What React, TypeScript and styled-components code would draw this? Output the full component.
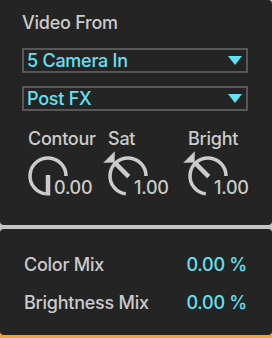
import React from 'react';
import styled, { createGlobalStyle } from 'styled-components';

const GlobalStyle = createGlobalStyle`
  html, body {
    margin: 0;
    padding: 0;
  }
  body {
    background: #c4c4c4;
    font-family: Inter, "Noto Sans", sans-serif;
    letter-spacing: -0.25px;
  }
`;

const Device = styled.div`
  width: 272px;
  height: 338px;
  display: flex;
  flex-direction: column;
  gap: 4px;
  background: linear-gradient(#c4c4c4 300px, #f2a33a 300px);
`;

const Panel = styled.section<{ $h: number; $radius: string }>`
  height: ${(p) => p.$h}px;
  background: #242424;
  border-radius: ${(p) => p.$radius};
  box-sizing: border-box;
`;

const TopPanel = styled(Panel)`
  padding: 12px 24px 0 22px;
`;

const BottomPanel = styled(Panel)`
  padding: 25px 25px 0 24px;
  display: flex;
  flex-direction: column;
  gap: 16px;
`;

const Title = styled.div`
  font-size: 18px;
  font-weight: 500;
  line-height: 22px;
  color: #cbcbcb;
  margin-bottom: 14px;
`;

const Select = styled.div`
  height: 25px;
  box-sizing: border-box;
  border: 2px solid #575757;
  display: flex;
  align-items: center;
  justify-content: space-between;
  padding: 0 4px 0 3px;
  font-size: 18px;
  font-weight: 500;
  line-height: 21px;
  color: #62e2f4;
  & + & {
    margin-top: 13px;
  }
`;

const Arrow = styled.span`
  width: 0;
  height: 0;
  border-left: 7px solid transparent;
  border-right: 7px solid transparent;
  border-top: 9px solid #62e2f4;
`;

const KnobRow = styled.div`
  display: grid;
  grid-template-columns: repeat(3, 80px);
  margin: 17px 0 0 6px;
`;

const KnobCell = styled.div`
  display: flex;
  flex-direction: column;
  gap: 6px;
`;

const KnobLabel = styled.div`
  font-size: 18px;
  font-weight: 500;
  line-height: 22px;
  color: #cbcbcb;
  white-space: nowrap;
`;

const Dial = styled.div`
  position: relative;
  width: 40px;
  height: 40px;
  svg {
    display: block;
    overflow: visible;
  }
`;

const DialValue = styled.span`
  position: absolute;
  left: 25px;
  top: 21px;
  font-size: 18px;
  font-weight: 500;
  line-height: 22px;
  color: #cbcbcb;
  background: #242424;
  padding-left: 1px;
`;

const MixRow = styled.div`
  display: flex;
  justify-content: space-between;
  font-size: 18px;
  font-weight: 500;
  line-height: 22px;
`;

const MixLabel = styled.span`
  color: #cbcbcb;
`;

const MixValue = styled.span`
  color: #62e2f4;
`;

const C = 20;
const R = 18;
const GREY = '#cbcbcb';

const pt = (deg: number, r: number) => {
  const a = (deg * Math.PI) / 180;
  return [C + r * Math.cos(a), C + r * Math.sin(a)];
};

const Knob = ({ label, value, amount }: { label: string; value: string; amount: number }) => {
  const [sx, sy] = pt(97, R);
  const [ex, ey] = pt(360, R);
  const angle = 90 + 270 * amount;
  const [nx, ny] = pt(angle, R + 1.5);
  const [bx, by] = pt(angle, -1);
  const [t1x, t1y] = pt(angle, 19);
  const [t2x, t2y] = pt(angle - 17, 28);
  const [t3x, t3y] = pt(angle + 17, 28);
  return (
    <KnobCell>
      <KnobLabel>{label}</KnobLabel>
      <Dial>
        <svg width="40" height="40" viewBox="0 0 40 40">
          <path
            d={`M ${sx} ${sy} A ${R} ${R} 0 1 1 ${ex} ${ey}`}
            fill="none"
            stroke={GREY}
            strokeWidth="3.5"
          />
          <line x1={bx} y1={by} x2={nx} y2={ny} stroke={GREY} strokeWidth="4.5" />
          {amount > 0 && (
            <polygon points={`${t1x},${t1y} ${t2x},${t2y} ${t3x},${t3y}`} fill={GREY} />
          )}
        </svg>
        <DialValue>{value}</DialValue>
      </Dial>
    </KnobCell>
  );
};

export default function App() {
  return (
    <>
      <GlobalStyle />
      <Device>
        <TopPanel $h={225} $radius="0 4px 4px 4px">
          <Title>Video From</Title>
          <Select>
            <span>5 Camera In</span>
            <Arrow />
          </Select>
          <Select>
            <span>Post FX</span>
            <Arrow />
          </Select>
          <KnobRow>
            <Knob label="Contour" value="0.00" amount={0} />
            <Knob label="Sat" value="1.00" amount={0.5} />
            <Knob label="Bright" value="1.00" amount={0.5} />
          </KnobRow>
        </TopPanel>
        <BottomPanel $h={106} $radius="4px">
          <MixRow>
            <MixLabel>Color Mix</MixLabel>
            <MixValue>0.00 %</MixValue>
          </MixRow>
          <MixRow>
            <MixLabel>Brightness Mix</MixLabel>
            <MixValue>0.00 %</MixValue>
          </MixRow>
        </BottomPanel>
      </Device>
    </>
  );
}
